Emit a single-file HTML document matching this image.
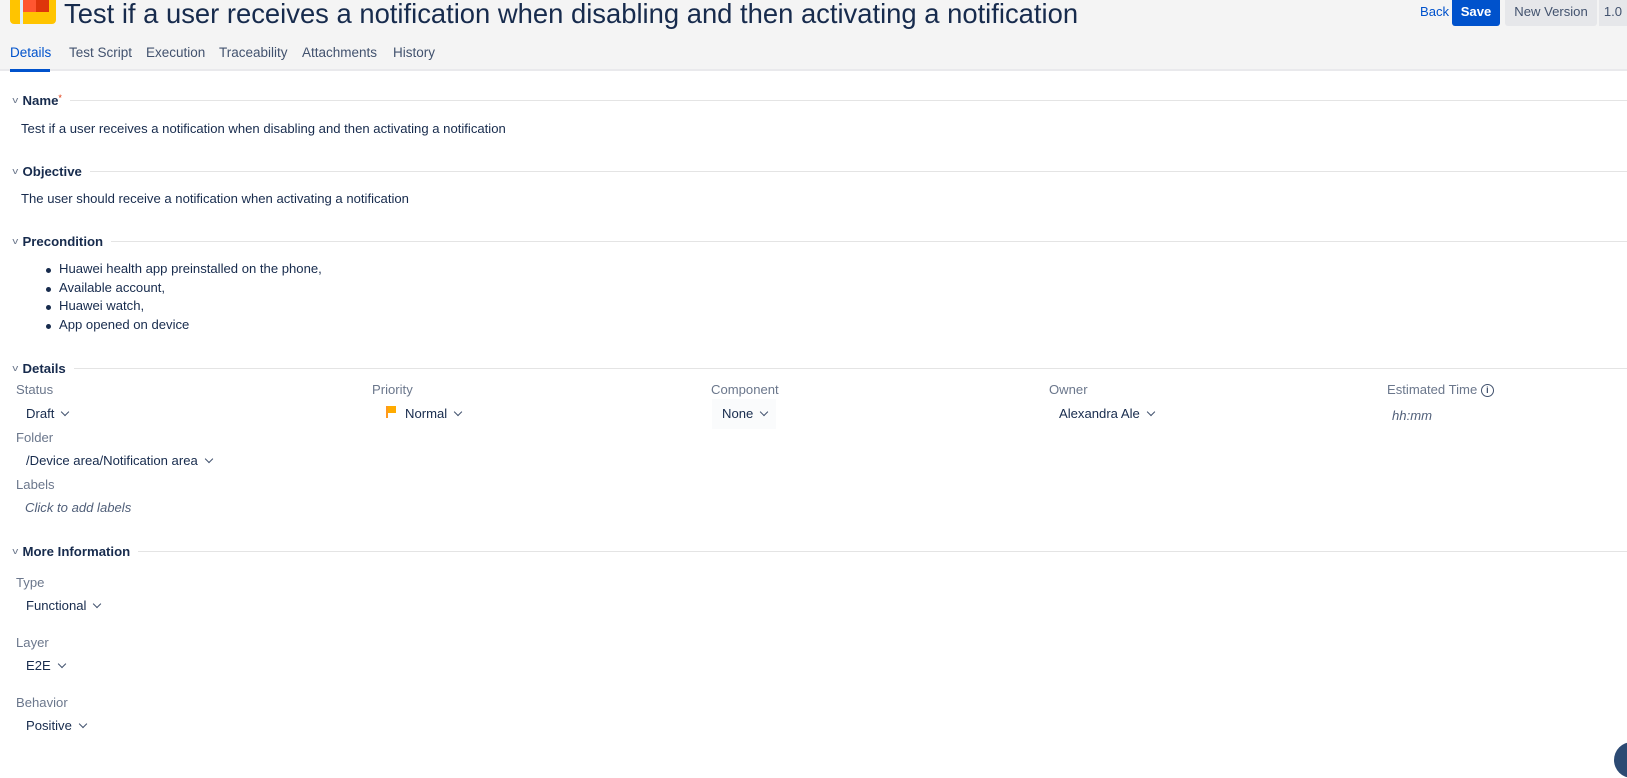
<!DOCTYPE html>
<html><head><meta charset="utf-8"><style>
*{margin:0;padding:0;box-sizing:border-box}
body{width:1627px;height:751px;overflow:hidden;background:#fff;font-family:"Liberation Sans",sans-serif;color:#172b4d;position:relative;font-size:13.1px}
.a{position:absolute;white-space:nowrap;line-height:20px}
.hdr{position:absolute;left:0;top:0;width:1627px;height:71px;background:#f4f4f4;border-bottom:2px solid #e9e9ec}
.title{position:absolute;left:64px;top:-3px;font-size:27.4px;line-height:34px;color:#172b4d}
.tab{position:absolute;top:43px;font-size:13.5px;color:#42526e;line-height:20px}
.sec{position:absolute;left:13px;height:20px;right:0;display:flex;align-items:center}
.sec .c{font-size:9px;color:#6b778c;margin-right:5px;transform:scaleX(1.3)}
.sec b{font-size:13.2px;color:#172b4d;margin-right:8px}
.sec .l{flex:1;height:1px;background:#e4e4e4}
.lbl{color:#6b778c}
.chev{display:inline-block;width:6px;height:6px;border-right:1.6px solid #42526e;border-bottom:1.6px solid #42526e;transform:rotate(45deg);margin-left:8px;position:relative;top:-3px}
.it{font-style:italic;color:#505f79}
ul{position:absolute;left:59px;top:260px;list-style:none}
ul li{line-height:18.7px;position:relative;font-size:13.1px}
ul li:before{content:"";position:absolute;left:-13px;top:8px;width:5px;height:5px;border-radius:50%;background:#172b4d}
</style></head><body>
<div class="hdr"></div>
<div style="position:absolute;left:10px;top:-8px;width:46px;height:32px;background:#ffc400;border-radius:4px"></div>
<div style="position:absolute;left:20px;top:-8px;width:3px;height:32px;background:#dceefc"></div>
<div style="position:absolute;left:23px;top:-8px;width:26px;height:20px;background:#ff5630"></div>
<div style="position:absolute;left:36px;top:-8px;width:13px;height:20px;background:#de350b"></div>
<div class="title">Test if a user receives a notification when disabling and then activating a notification</div>
<div class="a" style="left:1420px;top:2px;color:#0052cc">Back</div>
<div class="a" style="left:1452px;top:0;width:48px;height:26px;background:#0052cc;color:#fff;font-weight:bold;border-radius:0 0 3px 3px;text-align:center;line-height:24px">Save</div>
<div class="a" style="left:1505px;top:0;width:92px;height:26px;background:#e6e7ea;color:#42526e;text-align:center;line-height:24px;border-radius:0 0 3px 3px">New Version</div>
<div class="a" style="left:1599px;top:0;width:28px;height:26px;background:#e6e7ea;color:#42526e;text-align:center;line-height:24px">1.0</div>
<div class="tab" style="left:10px;color:#0052cc">Details</div>
<div style="position:absolute;left:10px;top:69px;width:40px;height:3px;background:#0052cc"></div>
<div class="tab" style="left:69px">Test Script</div>
<div class="tab" style="left:146px">Execution</div>
<div class="tab" style="left:219px">Traceability</div>
<div class="tab" style="left:302px">Attachments</div>
<div class="tab" style="left:393px">History</div>

<div class="sec" style="top:90px"><span class="c">v</span><b>Name<span style="color:#de350b;font-size:9px;vertical-align:top;font-weight:normal">*</span></b><span class="l"></span></div>
<div class="a" style="left:21px;top:119px">Test if a user receives a notification when disabling and then activating a notification</div>
<div class="sec" style="top:161px"><span class="c">v</span><b>Objective</b><span class="l"></span></div>
<div class="a" style="left:21px;top:189px">The user should receive a notification when activating a notification</div>
<div class="sec" style="top:231px"><span class="c">v</span><b>Precondition</b><span class="l"></span></div>
<ul><li>Huawei health app preinstalled on the phone,</li><li>Available account,</li><li>Huawei watch,</li><li>App opened on device</li></ul>
<div class="sec" style="top:358px"><span class="c">v</span><b>Details</b><span class="l"></span></div>
<div class="a lbl" style="left:16px;top:380px">Status</div>
<div class="a" style="left:26px;top:404px">Draft<span class="chev"></span></div>
<div class="a lbl" style="left:372px;top:380px">Priority</div>
<div style="position:absolute;left:386px;top:406px;width:2px;height:12px;background:#ff991f"></div>
<div style="position:absolute;left:388px;top:406px;width:8px;height:7px;background:#ffab00"></div>
<div class="a" style="left:405px;top:404px">Normal<span class="chev"></span></div>
<div class="a lbl" style="left:711px;top:380px">Component</div>
<div class="a" style="left:712px;top:399px;width:64px;height:30px;background:#fafbfc"></div>
<div class="a" style="left:722px;top:404px">None<span class="chev"></span></div>
<div class="a lbl" style="left:1049px;top:380px">Owner</div>
<div class="a" style="left:1059px;top:404px">Alexandra Ale<span class="chev"></span></div>
<div class="a lbl" style="left:1387px;top:380px">Estimated Time <span style="display:inline-block;width:13px;height:13px;border:1.5px solid #42526e;border-radius:50%;font-size:9px;line-height:10px;text-align:center;font-weight:bold;color:#42526e;vertical-align:1px">i</span></div>
<div class="a it" style="left:1392px;top:406px">hh:mm</div>
<div class="a lbl" style="left:16px;top:428px">Folder</div>
<div class="a" style="left:26px;top:451px">/Device area/Notification area<span class="chev"></span></div>
<div class="a lbl" style="left:16px;top:475px">Labels</div>
<div class="a it" style="left:25px;top:498px">Click to add labels</div>
<div class="sec" style="top:541px"><span class="c">v</span><b>More Information</b><span class="l"></span></div>
<div class="a lbl" style="left:16px;top:573px">Type</div>
<div class="a" style="left:26px;top:596px">Functional<span class="chev"></span></div>
<div class="a lbl" style="left:16px;top:633px">Layer</div>
<div class="a" style="left:26px;top:656px">E2E<span class="chev"></span></div>
<div class="a lbl" style="left:16px;top:693px">Behavior</div>
<div class="a" style="left:26px;top:716px">Positive<span class="chev"></span></div>
<div style="position:absolute;left:1614px;top:742px;width:36px;height:36px;border-radius:50%;background:#2c4a73"></div>
</body></html>
